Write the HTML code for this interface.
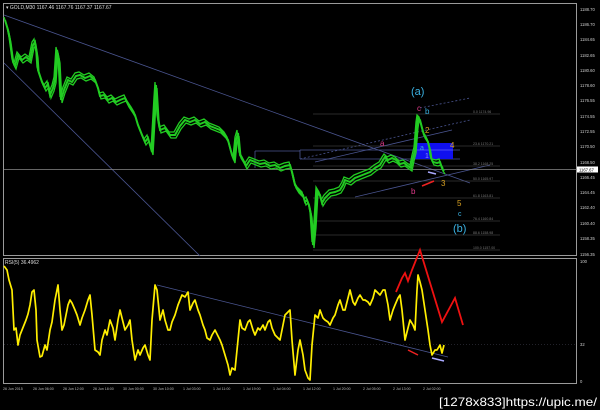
<!DOCTYPE html>
<html><head><meta charset="utf-8"><style>
html,body{margin:0;padding:0;background:#000;width:600px;height:410px;overflow:hidden}
svg{display:block}
text{font-family:"Liberation Sans",sans-serif}
</style></head><body>
<svg width="600" height="410" viewBox="0 0 600 410">
<defs>
<polyline id="px" points="5,20 8,30 10,40 13,62 15,66 18,55 22,60 26,57 30,60 33,45 35,42 37,55 38,70 42,82 45,88 48,84 50,95 53,88 55,80 57,50 59,60 61,100 64,90 68,80 72,82 76,76 80,75 85,78 90,76 95,80 98,88 100,96 104,95 108,100 112,98 116,102 120,100 125,98 128,104 132,110 135,115 138,125 142,135 145,142 148,138 152,152 155,100 156,85 158,118 160,130 165,128 170,135 175,135 180,126 185,120 190,122 195,120 200,124 205,122 210,126 215,128 220,130 225,135 228,140 232,155 234,160 236,140 238,133 240,155 243,160 246,166 250,160 255,162 260,164 265,163 270,166 275,165 280,168 285,166 290,165 292,172 295,185 298,190 300,192 303,195 305,202 307,200 309,205 311,215 313,245 315,225 317,190 320,195 322,203 325,198 330,193 335,192 340,190 343,185 345,180 350,182 355,178 360,176 365,174 370,172 375,168 380,165 383,160 385,157 388,160 392,158 396,160 400,164 404,163 408,166 411,168 413,158 415,150 417,125 418,118 420,120 422,128 424,135 426,138 428,142 430,150 431,158 433,162 437,163 440,162 442,168 444,171"/>
</defs>
<rect width="600" height="410" fill="#000"/>
<rect x="3.5" y="3.5" width="573" height="252" fill="none" stroke="#9a9a9a" stroke-width="1"/>
<rect x="3.5" y="258.5" width="573" height="125" fill="none" stroke="#9a9a9a" stroke-width="1"/>
<text x="6" y="9" font-size="5" fill="#ddd">▾ GOLD,M30  1167.46 1167.76 1167.37 1167.67</text>
<text x="5" y="264" font-size="5" fill="#ddd">RSI(5) 36.4962</text>
<g stroke="#4a5590" stroke-width="0.8" fill="none">
<line x1="4" y1="15" x2="470" y2="183"/>
<line x1="4" y1="63" x2="200" y2="256"/>
<line x1="255" y1="151" x2="300" y2="151"/>
<line x1="255" y1="151" x2="255" y2="168"/>
<line x1="315" y1="162" x2="452" y2="130"/>
<line x1="355" y1="197" x2="490" y2="165"/>
<line x1="300" y1="150" x2="460" y2="150"/>
<line x1="300" y1="159" x2="460" y2="159"/>
<line x1="300" y1="159" x2="300" y2="150"/>
<line x1="300" y1="159" x2="470" y2="120" stroke-dasharray="2,2"/>
<line x1="420" y1="108" x2="470" y2="98" stroke-dasharray="2,2"/>
</g>
<g stroke="#555" stroke-width="0.6">
<line x1="313" y1="114" x2="500" y2="114"/>
<line x1="313" y1="146" x2="500" y2="146"/>
<line x1="313" y1="166" x2="500" y2="166"/>
<line x1="313" y1="181" x2="500" y2="181"/>
<line x1="313" y1="198" x2="500" y2="198"/>
<line x1="313" y1="221" x2="500" y2="221"/>
<line x1="313" y1="235" x2="500" y2="235"/>
<line x1="313" y1="250" x2="500" y2="250"/>
</g>
<g font-size="3.5" fill="#777">
<text x="473" y="113">0.0 1174.96</text><text x="473" y="145">23.6 1170.21</text>
<text x="473" y="165">38.2 1168.25</text><text x="473" y="180">50.0 1165.97</text>
<text x="473" y="197">61.8 1163.81</text><text x="473" y="220">76.4 1160.84</text>
<text x="473" y="234">88.6 1158.98</text><text x="473" y="249">100.0 1157.00</text>
</g>
<line x1="4" y1="169.5" x2="577" y2="169.5" stroke="#888" stroke-width="0.8"/>
<rect x="414" y="143" width="39" height="16" fill="#1010ee"/>
<line x1="414" y1="150" x2="453" y2="150" stroke="#8888ff" stroke-width="0.5"/>
<g fill="none" stroke="#22cc22">
<use href="#px" stroke-width="2"/>
<use href="#px" stroke-width="1.3" transform="translate(1,3)"/>
<use href="#px" stroke-width="1.3" transform="translate(-1,-3)"/>
</g>
<g font-size="8">
<text x="411" y="95" fill="#3ab0e0" font-size="11">(a)</text>
<text x="417" y="111" fill="#e03a8a">c</text>
<text x="425" y="114" fill="#3ab0e0">b</text>
<text x="425" y="133" fill="#d8a020">2</text>
<text x="380" y="146" fill="#e03a8a">a</text>
<text x="420" y="150" fill="#3ab0e0" font-size="7">a</text>
<text x="425" y="158" fill="#8888ff" font-size="7">1</text>
<text x="450" y="148" fill="#d8a020">4</text>
<text x="441" y="186" fill="#d8a020">3</text>
<text x="411" y="194" fill="#e03a8a">b</text>
<text x="457" y="206" fill="#d8a020">5</text>
<text x="458" y="216" fill="#3ab0e0" font-size="7">c</text>
<text x="453" y="232" fill="#3ab0e0" font-size="11">(b)</text>
</g>
<line x1="422" y1="186" x2="434" y2="181" stroke="#ee2222" stroke-width="1.5"/>
<line x1="428" y1="172" x2="436" y2="174" stroke="#aaaaff" stroke-width="1.5"/>
<line x1="4" y1="344.5" x2="577" y2="344.5" stroke="#445" stroke-width="0.6" stroke-dasharray="1,2"/>
<line x1="157" y1="285" x2="448" y2="357" stroke="#4a5590" stroke-width="0.8"/>
<polyline fill="none" stroke="#ffee00" stroke-width="1.7" stroke-linejoin="round" points="4,266 7,270 9,280 12,290 14,330 16,328 18,345 20,335 22,330 24,325 26,320 28,314 30,305 32,292 34,290 36,310 37,340 40,357 42,356 45,345 47,350 50,330 52,322 55,300 58,285 60,310 62,330 64,325 66,315 68,305 70,300 72,303 75,310 77,315 80,325 82,318 85,310 88,300 90,295 92,315 95,350 98,352 100,355 102,340 105,330 107,335 110,320 113,328 115,340 118,320 120,310 123,322 125,330 128,325 130,320 132,340 135,360 138,350 140,355 143,348 145,345 148,355 150,360 152,320 155,285 157,290 160,320 163,310 165,320 168,330 170,330 172,322 175,315 178,305 180,300 182,295 185,297 188,292 190,310 193,303 195,300 198,310 200,315 203,325 205,330 207,338 210,340 212,335 215,330 218,336 220,340 222,345 225,355 228,365 230,375 232,368 235,370 238,340 240,320 242,328 245,330 248,322 250,320 253,330 255,335 258,328 260,330 263,325 265,330 268,322 270,320 272,328 275,335 278,338 280,340 283,325 285,315 288,312 290,310 292,340 295,375 298,350 300,340 303,355 305,370 308,378 310,380 312,345 315,315 318,318 320,310 323,318 325,320 328,322 330,325 333,318 335,315 338,305 340,300 343,310 345,310 348,298 350,290 353,302 355,305 358,298 360,295 363,300 365,300 368,302 370,305 373,298 375,290 378,293 380,295 383,290 385,290 388,305 390,320 393,310 395,305 398,298 400,295 402,310 405,340 408,328 410,320 413,325 415,330 417,290 418,275 420,282 422,290 425,310 428,330 430,345 432,355 435,350 437,350 440,345 442,353 444,345"/>
<polyline fill="none" stroke="#ee1111" stroke-width="1.8" points="396,292 402,278 405,273 408,281 412,270 420,250 442,322 455,298 463,325"/>
<line x1="408" y1="350" x2="418" y2="355" stroke="#ee2222" stroke-width="1.5"/>
<line x1="432" y1="358" x2="444" y2="361" stroke="#aaaaff" stroke-width="1.5"/>
<g font-size="4.2" fill="#ccc">
<text x="580" y="11">1188.70</text><text x="580" y="26">1186.70</text><text x="580" y="41">1184.65</text>
<text x="580" y="57">1182.65</text><text x="580" y="72">1180.60</text><text x="580" y="87">1178.60</text>
<text x="580" y="102">1176.55</text><text x="580" y="118">1174.55</text><text x="580" y="133">1172.55</text>
<text x="580" y="148">1170.50</text><text x="580" y="164">1168.50</text>
<text x="580" y="179">1166.45</text><text x="580" y="194">1164.45</text><text x="580" y="209">1162.40</text>
<text x="580" y="225">1160.40</text><text x="580" y="240">1158.35</text><text x="580" y="256">1156.35</text>
<text x="580" y="263">100</text><text x="580" y="346">32</text><text x="580" y="383">0</text>
</g>
<rect x="577" y="166.5" width="21" height="6" fill="#fff"/>
<text x="579" y="171.5" font-size="4.2" fill="#000">1167.67</text>
<g font-size="3.6" fill="#bbb">
<text x="3" y="390">26 Jun 2015</text><text x="33" y="390">26 Jun 06:00</text><text x="63" y="390">26 Jun 12:00</text>
<text x="93" y="390">26 Jun 18:00</text><text x="123" y="390">30 Jun 00:00</text><text x="153" y="390">30 Jun 10:00</text>
<text x="183" y="390">1 Jul 03:00</text><text x="213" y="390">1 Jul 11:00</text><text x="243" y="390">1 Jul 19:00</text>
<text x="273" y="390">1 Jul 04:00</text><text x="303" y="390">1 Jul 12:00</text><text x="333" y="390">1 Jul 20:00</text>
<text x="363" y="390">2 Jul 05:00</text><text x="393" y="390">2 Jul 13:00</text><text x="423" y="390">2 Jul 02:00</text>
</g>
<text x="439" y="406" font-size="12" fill="#fff" font-family="Liberation Sans Narrow,Liberation Sans,sans-serif" textLength="158" lengthAdjust="spacingAndGlyphs">[1278x833]https://upic.me/</text>
</svg>
</body></html>
